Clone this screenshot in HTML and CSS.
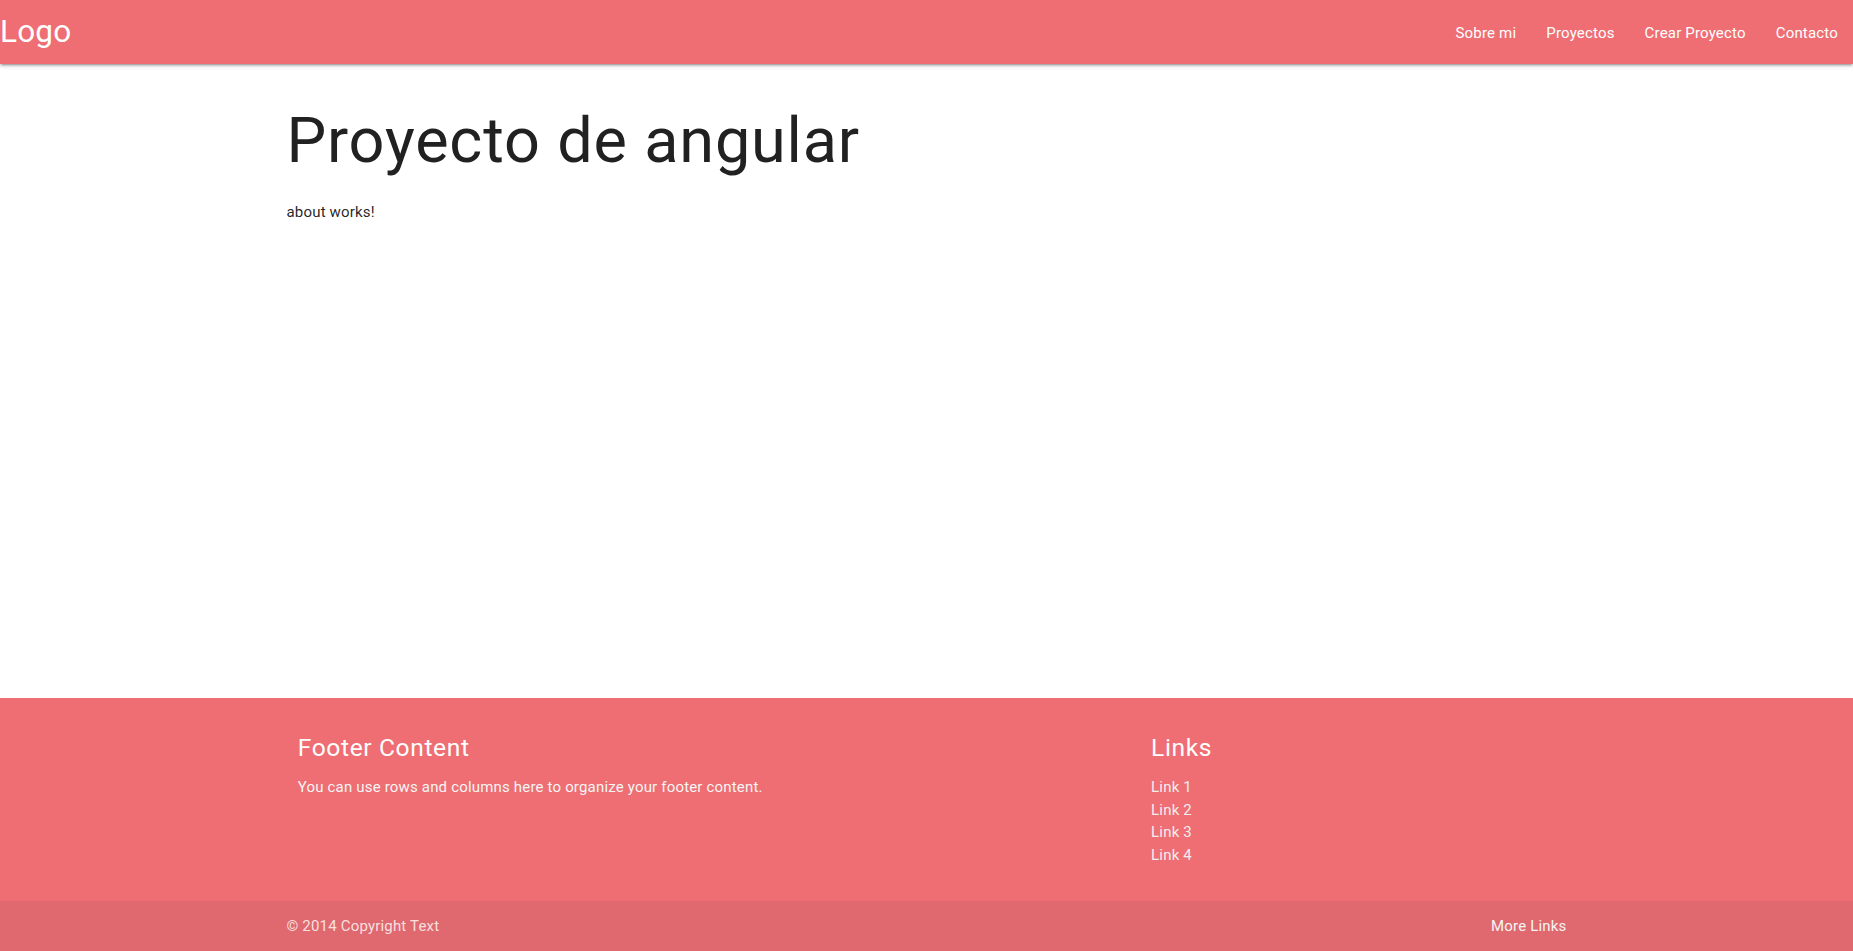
FILE: index.html
```html
<!DOCTYPE html>
<html lang="es">
<head>
<meta charset="utf-8">
<title>Proyecto de angular</title>
<link rel="stylesheet" href="styles.css">
</head>
<body>
<header>
  <nav class="nav">
    <a class="brand-logo" href="#">Logo</a>
    <ul class="nav-links">
      <li><a href="#">Sobre mi</a></li>
      <li><a href="#">Proyectos</a></li>
      <li><a href="#">Crear Proyecto</a></li>
      <li><a href="#">Contacto</a></li>
    </ul>
  </nav>
</header>
<main class="main">
  <div class="container">
    <h1 class="title">Proyecto de angular</h1>
    <p class="about">about works!</p>
  </div>
</main>
<footer class="page-footer">
  <div class="container">
    <div class="row">
      <div class="col col-l6">
        <h5 class="footer-title">Footer Content</h5>
        <p class="footer-text">You can use rows and columns here to organize your footer content.</p>
      </div>
      <div class="col col-l4 offset-l2">
        <h5 class="footer-title">Links</h5>
        <ul class="footer-links">
          <li><a href="#">Link 1</a></li>
          <li><a href="#">Link 2</a></li>
          <li><a href="#">Link 3</a></li>
          <li><a href="#">Link 4</a></li>
        </ul>
      </div>
    </div>
  </div>
  <div class="footer-copyright">
    <div class="container copyright-inner">
      <span>© 2014 Copyright Text</span>
      <a class="more-links" href="#">More Links</a>
    </div>
  </div>
</footer>
</body>
</html>
```

FILE: styles.css
```css
html {
  font-size: 15px;
}

* {
  box-sizing: border-box;
}

body {
  margin: 0;
  min-height: 100vh;
  display: flex;
  flex-direction: column;
  font-family: Roboto, "Liberation Sans", sans-serif;
  font-weight: 400;
  line-height: 1.5;
  letter-spacing: 0.012em;
  color: rgba(0, 0, 0, 0.87);
  background: #ffffff;
}

a {
  text-decoration: none;
}

/* Navigation */
.nav {
  height: 64px;
  line-height: 64px;
  background-color: #ee6e73;
  color: #ffffff;
  display: flex;
  justify-content: space-between;
  align-items: stretch;
  box-shadow: 0 2px 2px 0 rgba(0, 0, 0, 0.14), 0 3px 1px -2px rgba(0, 0, 0, 0.12), 0 1px 5px 0 rgba(0, 0, 0, 0.2);
  position: relative;
  z-index: 2;
}

.brand-logo {
  color: #ffffff;
  font-size: 2.1rem;
  padding: 0;
}

.nav-links {
  display: flex;
  margin: 0;
  padding: 0;
  list-style: none;
}

.nav-links a {
  display: block;
  padding: 1px 15px 0 15px;
  color: #ffffff;
  font-size: 1rem;
}

/* Main */
.main {
  flex: 1 0 auto;
}

.container {
  width: 70%;
  max-width: 1280px;
  margin: 0 auto;
}

.title {
  font-size: 4.2rem;
  font-weight: 400;
  line-height: 110%;
  letter-spacing: 0.013em;
  margin: 2.8rem 0 1.68rem 0;
  color: #212121;
}

.about {
  margin: 0;
  padding-top: 1px;
  font-size: 1rem;
}

/* Footer */
.page-footer {
  padding-top: 20px;
  background-color: #ee6e73;
  color: #ffffff;
}

.row {
  display: flex;
  margin-bottom: 20px;
}

.col {
  padding: 0 0.75rem;
}

.col-l6 {
  width: 50%;
}

.col-l4 {
  width: 33.3333%;
}

.offset-l2 {
  margin-left: 16.6667%;
}

.footer-title {
  font-size: 1.64rem;
  font-weight: 400;
  line-height: 110%;
  letter-spacing: 0.025em;
  margin: 1.0933rem 0 1rem 0;
  color: #ffffff;
}

.footer-text {
  margin: 0 0 15px 0;
  color: #f5f5f5;
}

.footer-links {
  list-style: none;
  padding: 0;
  margin: 0 0 15px 0;
}

.footer-links a {
  color: #eeeeee;
}

.footer-copyright {
  min-height: 50px;
  padding: 10px 0;
  display: flex;
  align-items: center;
  color: rgba(255, 255, 255, 0.8);
  background-color: rgba(51, 51, 51, 0.08);
}

.copyright-inner {
  display: flex;
  justify-content: space-between;
  align-items: center;
}

.more-links {
  color: #f5f5f5;
}
```
